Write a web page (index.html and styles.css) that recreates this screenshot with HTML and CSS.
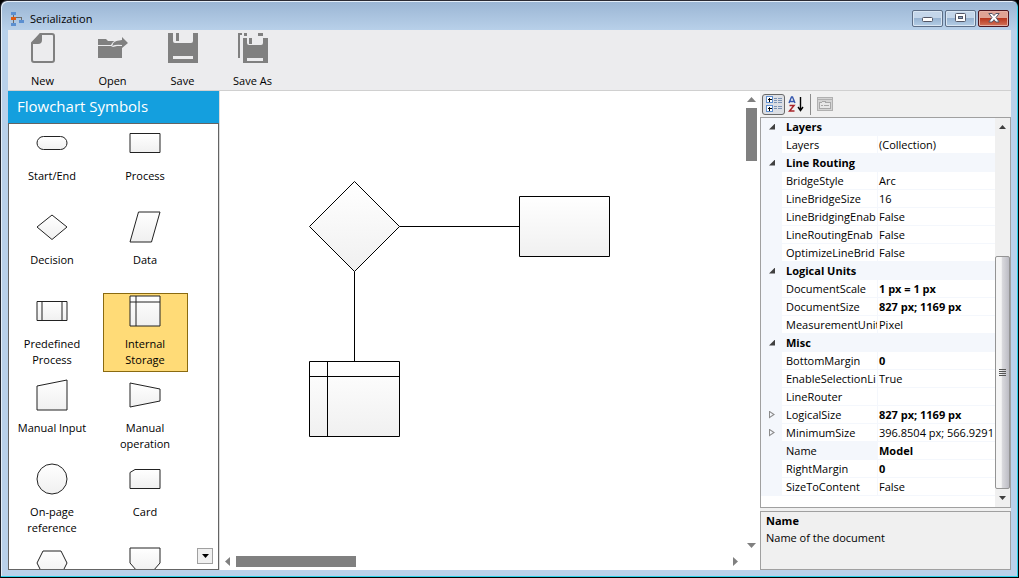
FILE: index.html
```html
<!DOCTYPE html>
<html lang="en">
<head>
<meta charset="utf-8">
<title>Serialization</title>
<link rel="stylesheet" href="styles.css">
</head>
<body>
<div class="window">
  <header class="titlebar">
    <svg class="app-icon" width="14" height="16" viewBox="0 0 14 16" shape-rendering="crispEdges">
      <path d="M2.500 3v11M5 6.500h5.500v3" fill="none" stroke="#6b6b6b"/>
      <path d="M0 1h5v3H0zM0 12h5v3H0zM8 9h5v3H8z" fill="#5b8fd0"/>
      <path d="M0 6h5v3H0z" fill="#e0590f"/>
    </svg>
    <h1 class="title">Serialization</h1>
    <div class="caption-buttons">
      <button class="caption" type="button" aria-label="Minimize"><svg width="12" height="10" viewBox="0 0 12 10"><rect x=".5" y="4.500" width="10" height="4" rx="1" fill="#fff" stroke="#535666"/></svg></button>
      <button class="caption" type="button" aria-label="Maximize"><svg width="12" height="10" viewBox="0 0 12 10"><rect x=".5" y=".5" width="10" height="8" rx="1" fill="#fff" stroke="#535666"/><rect x="3.500" y="3.500" width="4" height="2" fill="#8aa4c4" stroke="#535666"/></svg></button>
      <button class="caption close" type="button" aria-label="Close"><svg width="12" height="10" viewBox="0 0 12 10"><path d="M.8.500h3.400L6 2.600 7.800.500h3.400L8 4.500l3.200 4.500H7.800L6 6.700 4.200 9H.8L4 4.500z" fill="#fff" stroke="#535666"/></svg></button>
    </div>
  </header>

  <nav class="toolbar">
    <button class="tool" type="button">
      <svg width="32" height="32" viewBox="0 0 32 32"><path d="M13.500 2H25q2 0 2 2v24q0 2-2 2H7q-2 0-2-2V11z" fill="none" stroke="#808080" stroke-width="2"/><path d="M4 12 13 1h2v7q0 4-4 4z" fill="#808080"/></svg>
      <span>New</span>
    </button>
    <button class="tool" type="button">
      <svg width="32" height="32" viewBox="0 0 32 32" fill="#808080"><path d="M1 7h8l2 2h7l-4 4H1zM1 14h13l2 1 4-1h5v12H1z"/><path d="M15 14q1-6 10-6V5l6 6-6 5v-3q-6-1-10 1z"/><path d="M14.500 14q1-6.500 10-6.500" fill="none" stroke="#ececee"/></svg>
      <span>Open</span>
    </button>
    <button class="tool" type="button">
      <svg width="32" height="32" viewBox="0 0 32 32" fill="#808080"><path d="M1 1h5v8q0 2 2 2h16q2 0 2-2V1h5v30H1zM6 24v3h20v-3z" fill-rule="evenodd"/><path d="M9 1h3v8H9z"/></svg>
      <span>Save</span>
    </button>
    <button class="tool" type="button">
      <svg width="32" height="32" viewBox="0 0 32 32" fill="#808080"><path d="M1 1h4v2H3v23H1zM7 1h3v3H7zM21 1h5v3h-5z"/><path d="M6 6h4v5q0 2 2 2h12q2 0 2-2V6h5v25H6zM10 26v3h16v-3z" fill-rule="evenodd"/><path d="M12 6h3v6h-3z"/></svg>
      <span>Save As</span>
    </button>
  </nav>

  <main class="workspace">
    <aside class="palette">
      <h2 class="palette-title">Flowchart Symbols</h2>
      <div class="palette-list">
        <button class="symbol" type="button"><svg class="shape" viewBox="0 0 32 32"><rect x="1" y="9.500" width="30" height="13" rx="6.500"/></svg><span>Start/End</span></button>
        <button class="symbol" type="button"><svg class="shape" viewBox="0 0 32 32"><path d="M1 6.500h30v19H1z"/></svg><span>Process</span></button>
        <button class="symbol" type="button"><svg class="shape" viewBox="0 0 32 32"><path d="M16 4 31 16 16 28.500 1 16z"/></svg><span>Decision</span></button>
        <button class="symbol" type="button"><svg class="shape" viewBox="0 0 32 32"><path d="M9.500 1H31l-8.500 30H1z"/></svg><span>Data</span></button>
        <button class="symbol" type="button"><svg class="shape" viewBox="0 0 32 32"><path d="M1 6.500h30v19H1zM6 6.500v19M26 6.500v19"/></svg><span>Predefined Process</span></button>
        <button class="symbol selected" type="button"><svg class="shape" viewBox="0 0 32 32"><path d="M1 1h30v30H1zM7 1v30M1 7h30"/></svg><span>Internal Storage</span></button>
        <button class="symbol" type="button"><svg class="shape" viewBox="0 0 32 32"><path d="M1 7 31 1v30H1z"/></svg><span>Manual Input</span></button>
        <button class="symbol" type="button"><svg class="shape" viewBox="0 0 32 32"><path d="M1 4l30 6v12L1 28z"/></svg><span>Manual operation</span></button>
        <button class="symbol" type="button"><svg class="shape" viewBox="0 0 32 32"><circle cx="16" cy="16" r="15"/></svg><span>On-page reference</span></button>
        <button class="symbol" type="button"><svg class="shape" viewBox="0 0 32 32"><path d="M6 6.500h25v19H1V9.500z"/></svg><span>Card</span></button>
        <button class="symbol" type="button" aria-label="Preparation"><svg class="shape" viewBox="0 0 32 32"><path d="M7 4h18l6 12-6 12H7L1 16z"/></svg></button>
        <button class="symbol" type="button" aria-label="Off-page reference"><svg class="shape" viewBox="0 0 32 32"><path d="M1 1h30v15l-7 8H8l-7-8z"/></svg></button>
      </div>
      <button class="palette-down" type="button" aria-label="Scroll down"><svg width="7" height="4" viewBox="0 0 7 4"><path d="M0 0h7L3.500 4z"/></svg></button>
    </aside>

    <section class="canvas">
      <svg class="diagram" width="523" height="461" viewBox="220 91 523 461">
        <defs><linearGradient id="fill" x2="0" y2="1"><stop stop-color="#fff"/><stop offset="1" stop-color="#f0f0f0"/></linearGradient></defs>
        <g fill="url(#fill)" stroke="#000">
          <path d="M354.500 181.500l45 45-45 45-45-45z"/>
          <path d="M519.500 196.500h90v60h-90z"/>
          <path d="M309.500 361.500h90v75h-90zM327.500 361.500v75M309.500 376.500h90"/>
          <path d="M399.500 226.500h120M354.500 271.500v90"/>
        </g>
      </svg>
      <div class="scroll vertical">
        <svg width="9" height="5" viewBox="0 0 9 5"><path d="M0 5h9L4.500 0z"/></svg>
        <div class="track"><div class="thumb"></div></div>
        <svg width="9" height="5" viewBox="0 0 9 5"><path d="M0 0h9L4.500 5z"/></svg>
      </div>
      <div class="scroll horizontal">
        <svg width="5" height="9" viewBox="0 0 5 9"><path d="M5 0v9L0 4.500z"/></svg>
        <div class="track"><div class="thumb"></div></div>
        <svg width="5" height="9" viewBox="0 0 5 9"><path d="M0 0v9l5-4.500z"/></svg>
      </div>
    </section>

    <aside class="inspector">
      <div class="inspector-tools">
        <button class="mini pressed" type="button" aria-label="Categorized"><svg width="18" height="18" viewBox="0 0 18 18" fill="none" shape-rendering="crispEdges"><path d="M1.500 1.500h6v6h-6zM1.500 10.500h6v6h-6z" fill="#fff" stroke="#5f8fd0"/><path d="M3 4.500h4M4.500 3v4M3 13.500h4M4.500 12v4" stroke="#000"/><path d="M9 3.500h3M9 5.500h3M9 7.500h3M9 11.500h3M9 13.500h3M13 3.500h4M13 5.500h4M13 7.500h4M13 11.500h4M13 13.500h4" stroke="#7b93b4"/></svg></button>
        <button class="mini" type="button" aria-label="Alphabetical"><svg width="18" height="18" viewBox="0 0 18 18" fill="none"><path d="M1 8 3.500 2h1L7 8M2 6.500h4" stroke="#3557ad" stroke-width="1.400"/><path d="M1.500 10.500H6l-4.500 5.500h5" stroke="#a8242a" stroke-width="1.500"/><path d="M12.500 2v13M10 12l2.500 3.500L15 12" stroke="#000" stroke-width="1.400"/></svg></button>
        <span class="divider"></span>
        <button class="mini" type="button" aria-label="Property Pages" disabled><svg width="18" height="18" viewBox="0 0 18 18" fill="none" shape-rendering="crispEdges"><path d="M1.500 2.500h15v13h-15z" fill="#d4d4d4" stroke="#b0b0b0"/><path d="M2 4.500h14" stroke="#b0b0b0"/><path d="M3.500 7.500h2l1-1h3v1h5v6h-11zM5 10.500h2M8 10.500h5" fill="#e8e8e8" stroke="#a8a8a8"/></svg></button>
      </div>
      <div class="grid-frame">
        <div class="grid-scroll">
        <table class="props">
          <colgroup><col class="c-gutter"><col class="c-name"><col class="c-value"></colgroup>
          <tbody>
          <tr class="cat"><td><i class="open"></i></td><th colspan="2">Layers</th></tr>
          <tr><td></td><th>Layers</th><td>(Collection)</td></tr>
          <tr class="cat"><td><i class="open"></i></td><th colspan="2">Line Routing</th></tr>
          <tr><td></td><th>BridgeStyle</th><td>Arc</td></tr>
          <tr><td></td><th>LineBridgeSize</th><td>16</td></tr>
          <tr><td></td><th>LineBridgingEnab</th><td>False</td></tr>
          <tr><td></td><th>LineRoutingEnab</th><td>False</td></tr>
          <tr><td></td><th>OptimizeLineBrid</th><td>False</td></tr>
          <tr class="cat"><td><i class="open"></i></td><th colspan="2">Logical Units</th></tr>
          <tr><td></td><th>DocumentScale</th><td><b>1 px = 1 px</b></td></tr>
          <tr><td></td><th>DocumentSize</th><td><b>827 px; 1169 px</b></td></tr>
          <tr><td></td><th>MeasurementUnit</th><td>Pixel</td></tr>
          <tr class="cat"><td><i class="open"></i></td><th colspan="2">Misc</th></tr>
          <tr><td></td><th>BottomMargin</th><td><b>0</b></td></tr>
          <tr><td></td><th>EnableSelectionLi</th><td>True</td></tr>
          <tr><td></td><th>LineRouter</th><td></td></tr>
          <tr><td><i class="closed"></i></td><th>LogicalSize</th><td><b>827 px; 1169 px</b></td></tr>
          <tr><td><i class="closed"></i></td><th>MinimumSize</th><td>396.8504 px; 566.9291</td></tr>
          <tr class="current"><td></td><th>Name</th><td><b>Model</b></td></tr>
          <tr><td></td><th>RightMargin</th><td><b>0</b></td></tr>
          <tr><td></td><th>SizeToContent</th><td>False</td></tr>
          </tbody>
        </table>
        </div>
        <div class="winscroll">
          <svg width="7" height="4" viewBox="0 0 7 4"><path d="M0 4h7L3.500 0z"/></svg>
          <div class="wintrack"><div class="winthumb"><i></i><i></i><i></i><i></i></div></div>
          <svg width="7" height="4" viewBox="0 0 7 4"><path d="M0 0h7L3.500 4z"/></svg>
        </div>
      </div>
      <div class="description"><b>Name</b><p>Name of the document</p></div>
    </aside>
  </main>
</div>
</body>
</html>
```
FILE: styles.css
```css
* { box-sizing: border-box; }
html, body { height: 100%; }
body {
  margin: 0;
  background: #000;
  color: #000;
  font: 11px/16px "Open Sans", "Noto Sans", sans-serif;
}
button { font: inherit; color: inherit; border: 0; background: none; padding: 0; }
svg { display: block; flex: none; }
h1, h2, p { margin: 0; font-weight: 400; }

.window {
  height: 100vh;
  display: flex;
  flex-direction: column;
  padding: 2px 7px 7px;
  border: 1px solid #000;
  border-top-color: #2b2b33;
  border-left-color: #20242c;
  border-radius: 7px 7px 0 0;
  background: linear-gradient(#9ab5d3, #b9d1ea 30px);
  box-shadow: inset -1px -1px 0 #2bd0e8, inset 1px 1px 0 #e4eef8;
}
.titlebar { height: 27px; flex: none; display: flex; align-items: center; padding-left: 3px; }
.title { font-size: 11px; margin-left: 5px; flex: 1; padding-top: 5px; }
.app-icon { margin-top: 4px; }
.caption-buttons { display: flex; gap: 2px; padding: 3px 2px 0 0; }
.caption {
  width: 31px;
  height: 17px;
  display: flex;
  align-items: center;
  justify-content: center;
  border: 1px solid #5d6e87;
  border-radius: 2px;
  background: linear-gradient(#c4d6ea 45%, #98b4d2 50%, #b4cde6);
  box-shadow: inset 0 0 0 1px #d9e6f3;
}
.close {
  border-color: #4d1620;
  background: linear-gradient(#dfa294 45%, #b8371f 50%, #d3745a);
  box-shadow: inset 0 0 0 1px #e5b0a5;
}

.toolbar { height: 61px; flex: none; display: flex; background: #ececee; border-bottom: 1px solid #d0d0d0; }
.tool { width: 70px; display: flex; flex-direction: column; align-items: center; justify-content: flex-start; gap: 9px; padding: 2px 1px 0 0; }

.workspace { flex: 1; min-height: 0; display: grid; grid-template-columns: 212px 1fr 251px; background: #fff; }

.palette { position: relative; min-height: 0; display: flex; flex-direction: column; border-right: 1px solid #dcdcdc; }
.palette-title { height: 32px; flex: none; padding-left: 9px; font-size: 15px; line-height: 31px; color: #fff; background: #149fde; }
.palette-list {
  flex: 1;
  min-height: 0;
  overflow: hidden;
  display: grid;
  grid-template-columns: 85px 85px;
  grid-auto-rows: 79px;
  gap: 5px 8px;
  padding: 1px;
  border: 1px solid #646464;
}
.symbol { display: flex; flex-direction: column; align-items: center; gap: 9px; padding: 1px 5px 0 4px; border: 1px solid transparent; }
.selected { background: #ffdb77; border-color: #8a6a10; }
.shape { width: 32px; height: 32px; fill: url(#fill); stroke: #222; }
.palette-down { position: absolute; right: 6px; bottom: 6px; width: 16px; height: 16px; display: grid; place-items: center; border: 1px solid #a0a0a0; background: #f0f0f0; }

.canvas { min-width: 0; min-height: 0; display: grid; grid-template: 1fr 17px / 1fr 17px; overflow: hidden; }
.diagram { min-height: 0; }
.scroll { display: flex; align-items: center; fill: #808080; }
.track { flex: 1; display: flex; }
.thumb { background: #808080; }
.vertical { flex-direction: column; padding: 6px 0 5px; gap: 6px; }
.vertical .thumb { width: 11px; height: 53px; }
.horizontal { padding: 0 5px; gap: 6px; }
.horizontal .thumb { width: 120px; height: 11px; }

.inspector { min-width: 0; min-height: 0; display: flex; flex-direction: column; background: #f0f0f0; }
.inspector-tools { height: 26px; flex: none; display: flex; align-items: center; padding-left: 2px; }
.mini { width: 23px; height: 21px; display: grid; place-items: center; }
.pressed { border: 1px solid #6a6a6a; border-radius: 3px; background: #dcdfe4; }
.divider { width: 1px; height: 21px; margin: 0 2px; background: #8c8c8c; }
.grid-frame { flex: 1; min-height: 0; display: flex; border: 1px solid #a0a0a0; background: #fff; overflow: hidden; }
.grid-scroll { flex: 1; min-width: 0; overflow: hidden; }
.props { width: 100%; table-layout: fixed; border-collapse: separate; border-spacing: 0; }
.c-gutter { width: 21px; }
.c-name { width: 95px; }
.props td, .props th { height: 18px; padding: 0 0 0 4px; font-weight: 400; text-align: left; line-height: 17px; white-space: nowrap; overflow: hidden; border-bottom: 1px solid #f4f7fc; }
.props td:first-child { background: #f4f7fc; padding-left: 8px; }
.props th + td { border-left: 1px solid #f4f7fc; padding-left: 1px; }
.props .cat th { font-weight: 700; background: #f4f7fc; }
.current th { background: #f4f7fc; }
.open, .closed { display: block; width: 6px; height: 6px; background: #404040; clip-path: polygon(100% 0, 100% 100%, 0 100%); }
.closed { height: 8px; background: #8c8c8c; clip-path: polygon(0 0, 100% 50%, 0 100%, 0 0, 1px 2px, 1px 6px, 4px 50%, 1px 2px); }
.winscroll { width: 15px; flex: none; display: flex; flex-direction: column; align-items: center; gap: 7px; padding: 7px 0; background: #f0f0f0; fill: #404040; }
.wintrack { flex: 1; align-self: stretch; display: flex; flex-direction: column; justify-content: flex-end; }
.winthumb { height: 66%; display: flex; flex-direction: column; align-items: center; justify-content: center; gap: 1px; border: 1px solid #949494; border-radius: 2px; background: linear-gradient(90deg, #f5f5f5 40%, #d8d8dc 50%, #bcbcc4); }
.winthumb i { width: 7px; height: 1px; background: #555; }
.description { height: 59px; flex: none; margin-top: 3px; padding: 0 5px; border: 1px solid #a0a0a0; line-height: 17px; }
```
